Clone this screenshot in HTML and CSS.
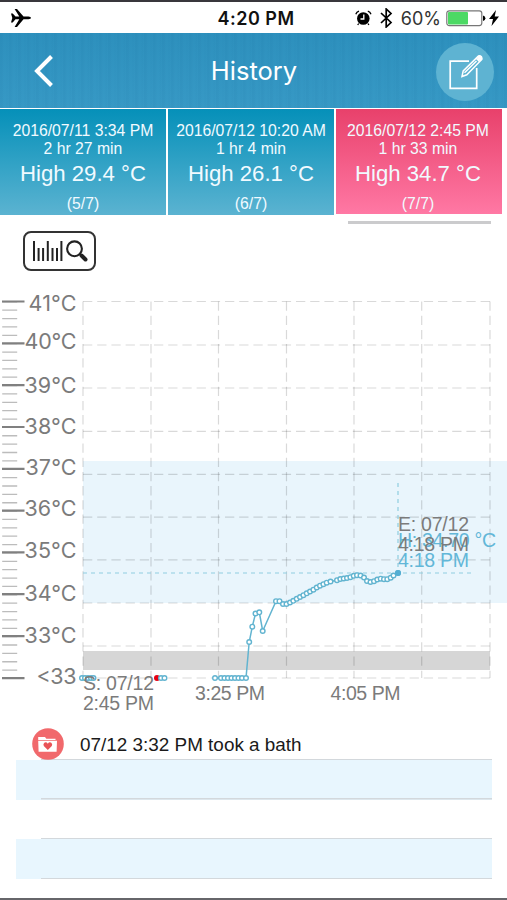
FILE: index.html
```html
<!DOCTYPE html>
<html lang="en">
<head>
  <meta charset="UTF-8" />
  <meta name="viewport" content="width=device-width, initial-scale=1.0"/>
  <title>History</title>
  <link rel="stylesheet" href="styles.css">
</head>
<body>
  <div class="statusbar">
    <svg class="plane" width="20" height="18" viewBox="0 0 20 18">
      <path d="M0 4.500H1.700L4.500 7.600H8.300L3.600 0H6L12.500 7.600H17.500Q20 8 20 9Q20 10 17.500 10.300H12.500L6 18H3.600L8.300 10.300H4.500L1.700 13.500H0L1.300 9Z"/>
    </svg>
    <span class="time">4:20 PM</span>
    <div class="status-right">
      <svg width="17" height="16" viewBox="0 0 17 16">
        <circle cx="8.300" cy="8.500" r="6.300"/>
        <path d="M8.800 4.500V9H5.500" fill="none" stroke="#fff" stroke-width="1.300"/>
        <path d="M.8 4.300Q1.600 1.800 4 1.100M12.800 1.100Q15.200 1.800 16 4.300M3.700 13.500L2.700 15M12.900 13.500L13.900 15" fill="none" stroke="#000" stroke-width="1.300"/>
      </svg>
      <svg class="bluetooth" width="13" height="20" viewBox="0 0 13 20">
        <path d="M1 5L11 14.500L6.200 19V1L11 5.500L1 15" fill="none" stroke="#000" stroke-width="1.700"/>
      </svg>
      <span class="percent">60%</span>
      <svg class="battery" width="40" height="17" viewBox="0 0 40 17">
        <rect x=".8" y=".8" width="35" height="14.800" rx="2.500" fill="#fff" stroke="#777" stroke-width="1.200"/>
        <rect x="2" y="2" width="20" height="12.400" rx="1" fill="#4cd964"/>
        <path d="M37 5.500Q39.400 6 39.400 8.300T37 11Z"/>
      </svg>
      <svg width="10" height="16" viewBox="0 0 10 16">
        <path d="M7 0L0 9H4L2.500 16L10 6.500H5.700Z"/>
      </svg>
    </div>
  </div>

  <div class="header">
    <svg class="back" width="20" height="32" viewBox="0 0 20 32">
      <path d="M17.500 1.500L3 16L17.500 30.500" fill="none" stroke="#fff" stroke-width="4"/>
    </svg>
    <h1>History</h1>
    <div class="edit">
      <svg width="36" height="38" viewBox="0 0 36 38" fill="none" stroke="#fff" stroke-width="1.700">
        <path d="M21 7.200H2.200V34.300H28.700V14"/>
        <path d="M14 22.500L15.200 17L30.300 2.200Q31.500 1.400 32.800 2.700T33.800 5.500L18.800 20.800ZM28.300 4.200L32 8M16.500 18.800L28.500 7" stroke-width="1.500"/>
        <circle cx="31.800" cy="4" r="1.800" fill="#fff"/>
      </svg>
    </div>
  </div>

  <div class="records">
    <div class="record">
      <p class="date">2016/07/11 3:34 PM</p>
      <p class="duration">2 hr 27 min</p>
      <p class="high">High 29.4 °C</p>
      <p class="count">(5/7)</p>
    </div>
    <div class="record">
      <p class="date">2016/07/12 10:20 AM</p>
      <p class="duration">1 hr 4 min</p>
      <p class="high">High 26.1 °C</p>
      <p class="count">(6/7)</p>
    </div>
    <div class="record active">
      <p class="date">2016/07/12 2:45 PM</p>
      <p class="duration">1 hr 33 min</p>
      <p class="high">High 34.7 °C</p>
      <p class="count">(7/7)</p>
    </div>
  </div>
  <div class="scrollbar"></div>

  <div class="tools">
    <div class="zoom-btn">
      <svg width="56" height="22" viewBox="0 0 56 22" fill="none" stroke="#222">
        <path d="M2 1V21M15.800 1V21M29.400 1V21" stroke-width="2"/>
        <path d="M6.600 8V21M11.100 8V21M20.500 8V21M25 8V21" stroke-width="2"/>
        <circle cx="42.500" cy="8.800" r="7.400" stroke-width="2.100"/>
        <path d="M48 14L50 16" stroke-width="2"/>
        <path d="M49.500 15.500L53.500 19.500" stroke-width="4" stroke-linecap="round"/>
      </svg>
    </div>
  </div>

  <svg class="chart" width="507" height="439" viewBox="0 280 507 439">
    <defs>
      <marker id="dot" markerUnits="userSpaceOnUse" markerWidth="8" markerHeight="8" refX="4" refY="4">
        <circle cx="4" cy="4" r="2.300" fill="#fff" stroke="#62b4d0" stroke-width="1.400"/>
      </marker>
    </defs>

    <!-- normal range and low band -->
    <rect x="83" y="461" width="424" height="142" fill="#e9f5fc"/>
    <rect x="83" y="651" width="407" height="19" fill="#d6d6d6"/>

    <!-- ruler -->
    <path class="minor" d="M9.700 301.200V678"/>
    <path class="major" d="M2 301.500H24.500M2 343.300H24.500M2 385.200H24.500M2 427H24.500M2 468.800H24.500M2 510.600H24.500M2 552.400H24.500M2 594.200H24.500M2 636.200H24.500M2 678.200H24.500"/>
    <g class="degree">
      <text x="28.500" y="310.700" textLength="48">41°C</text>
      <text x="24.500" y="348.700" textLength="52">40°C</text>
      <text x="24.500" y="392.700" textLength="52">39°C</text>
      <text x="24.500" y="434" textLength="52">38°C</text>
      <text x="25.500" y="475.300" textLength="51">37°C</text>
      <text x="24.500" y="516.200" textLength="52">36°C</text>
      <text x="24.500" y="557.500" textLength="52">35°C</text>
      <text x="24.500" y="601.300" textLength="52">34°C</text>
      <text x="24.500" y="642.500" textLength="52">33°C</text>
      <text x="36.500" y="683.500" textLength="40">&lt;33</text>
    </g>

    <!-- grid -->
    <path class="grid" d="M83 301.500H490M83 345H490M83 388H490M83 431.300H490M83 474.300H490M83 517.200H490M83 559.800H490M83 603H490M83 646H490M83 678H490"/>
    <path class="grid" d="M83 301.500V678M151 301.500V678M218.500 301.500V678M286.500 301.500V678M354 301.500V678M421.700 301.500V678M490 301.500V678"/>

    <!-- highest reading -->
    <path class="peak" d="M83 573H475M398 483V573"/>

    <polyline class="line" points="82,678 85,678 88,678 91,678 93.500,678"/>
    <circle cx="157" cy="678" r="3" fill="#e60012"/>
    <polyline class="line" points="161,678 164.500,678"/>
    <polyline class="line" points="215,678 221,678 224.500,678 228,678 231.500,678 235,678 238.500,678 242,678 246,678 249.200,642 252.300,626.700 255.500,613.500 259.300,612.300 262.700,631 276,601.200 279.500,601.200 283,604 286.500,604 290,602.500 293.300,600.800 296.700,598.800 300,597 303.400,595.200 306.700,593.300 310,591.500 313.400,589.700 316.700,587.500 320,585.700 323.400,584.200 326.700,582.700 330.500,581.500 337,580.200 340.300,579 343.700,578.500 347,578 350.400,577.200 353.700,575.800 357,575.200 360.500,575.500 364,577.500 367,581 370.500,582 374,581.200 377.300,579.500 380.700,578.700 384,579.200 387.300,579.200 390.700,577.700 393.500,575.500 398,573"/>
    <circle cx="398" cy="573" r="3" fill="#54aed3"/>

    <g class="label">
      <text x="83" y="689.500" textLength="71">S: 07/12</text>
      <text x="83" y="709.700" textLength="71">2:45 PM</text>
      <text x="195" y="699.500" textLength="70">3:25 PM</text>
      <text x="330.500" y="699.500" textLength="70">4:05 PM</text>
      <g class="blue">
        <text x="398" y="546.500" textLength="98">H: 34.70 °C</text>
        <text x="398" y="567" textLength="71">4:18 PM</text>
      </g>
      <text x="398" y="530.700" textLength="71">E: 07/12</text>
      <text x="398" y="551.300" textLength="71">4:18 PM</text>
    </g>
  </svg>

  <div class="notes">
    <div class="note first">
      <svg class="note-icon" width="32" height="32" viewBox="0 0 32 32">
        <circle cx="16" cy="16" r="15.800" fill="#f1696c"/>
        <path d="M6.200 9H13L14.300 10.700H23.500V12H6.200ZM6.200 12.700H25L24.600 23.700H6.600Z" fill="#fff"/>
        <path d="M15.800 22L11.800 18Q10.800 16 12.300 14.700Q14.400 13.700 15.800 15.700Q17.200 13.700 19.300 14.700Q20.800 16 19.800 18Z" fill="#e95357"/>
      </svg>
      <span>07/12 3:32 PM took a bath</span>
    </div>
    <div class="note shaded"></div>
    <div class="note"></div>
    <div class="note shaded"></div>
  </div>
</body>
</html>
```
FILE: styles.css
```css
* {
  box-sizing: border-box;
  margin: 0;
  padding: 0;
}

body {
  width: 507px;
  height: 900px;
  background-color: #fff;
  border-bottom: 2px solid #66666a;
  font-family: "Liberation Sans", Arial, sans-serif;
  overflow: hidden;
}

.statusbar {
  display: grid;
  grid-template-columns: 1fr auto 1fr;
  align-items: center;
  height: 33px;
  padding: 1px 8px 0 11px;
  border-top: 2px solid #39373c;
  font-family: Inter, sans-serif;
  color: #111;
}

.time {
  margin-left: 2px;
  font-size: 18px;
  font-weight: 600;
  letter-spacing: 0.500px;
}

.status-right {
  display: flex;
  align-items: center;
  justify-content: flex-end;
}

.bluetooth {
  margin-left: 8px;
}

.percent {
  margin-left: 8px;
  font-size: 18px;
  color: #333;
}

.battery {
  margin: 0 3px 0 5px;
}

.header {
  display: grid;
  grid-template-columns: 1fr auto 1fr;
  align-items: center;
  height: 75px;
  padding: 0 13px;
  background:
    repeating-linear-gradient(90deg, rgba(0, 70, 120, 0.040) 0 2px, transparent 4px 6px, rgba(0, 70, 120, 0.025) 7px, transparent 9px),
    linear-gradient(#2d90bd, #3799c5);
}

.back {
  margin-left: 21px;
}

.header h1 {
  margin-left: 1px;
  color: #fff;
  font-family: Inter, sans-serif;
  font-size: 25.500px;
  font-weight: 400;
}

.edit {
  display: flex;
  align-items: center;
  justify-content: center;
  justify-self: end;
  width: 58px;
  height: 58px;
  margin-top: 2px;
  padding: 2px 0 0 1px;
  border-radius: 50%;
  background-color: #5eb3d2;
}

.records {
  display: flex;
  gap: 2px;
  height: 107px;
  padding-top: 1px;
}

.record {
  width: 166px;
  padding-top: 13px;
  background: linear-gradient(#0590b9, #5bb3d1);
  color: #f1faff;
  text-align: center;
  white-space: nowrap;
}

.record.active {
  margin-bottom: 1px;
  padding-right: 2px;
  background: linear-gradient(#e8416b, #ff78a4);
}

.date,
.duration,
.count {
  font-size: 15.750px;
  line-height: 18px;
}

.high {
  margin-top: 2px;
  font-size: 22.200px;
  line-height: 27px;
}

.count {
  margin-top: 8px;
}

.scrollbar {
  width: 143px;
  height: 3px;
  margin: 6px 0 0 348px;
  background-color: #cbcbcd;
}

.tools {
  height: 56px;
  padding: 7px 0 0 23px;
}

.zoom-btn {
  display: flex;
  align-items: center;
  justify-content: center;
  width: 73px;
  height: 40px;
  border: 2px solid #333;
  border-radius: 8px;
}

.chart {
  display: block;
}

.minor {
  fill: none;
  stroke: #bcbcbc;
  stroke-width: 15;
  stroke-dasharray: 1.300 7.070;
}

.major {
  stroke: #808080;
  stroke-width: 2.200;
}

.grid {
  fill: none;
  stroke: #000;
  stroke-opacity: 0.150;
  stroke-width: 1.200;
  stroke-dasharray: 9.300 4.900;
}

.peak {
  fill: none;
  stroke: #8fcddf;
  stroke-width: 1.200;
  stroke-dasharray: 4 4;
}

.line {
  fill: none;
  stroke: #62b4d0;
  stroke-width: 1.500;
  marker: url(#dot);
}

.degree {
  fill: #7b7b7b;
  font-family: Inter, sans-serif;
  font-size: 21.500px;
  font-weight: 400;
}

.label {
  fill: #7b7b7b;
  font-size: 19.500px;
}

.blue {
  fill: #62b7d8;
}

.notes {
  padding: 4px 15px 0 16px;
}

.note {
  height: 39.700px;
  background: linear-gradient(#d3d8dc, #d3d8dc) 25px 100% / 451px 1.500px no-repeat;
}

.note.shaded {
  background-color: #e8f6fe;
}

.note.first {
  display: flex;
  align-items: flex-end;
  height: 37px;
  padding-left: 16px;
  font-size: 18.900px;
  line-height: 30px;
  color: #1a1a1a;
}

.note-icon {
  margin-right: 16px;
}
```
